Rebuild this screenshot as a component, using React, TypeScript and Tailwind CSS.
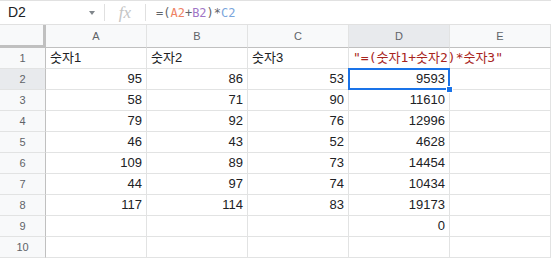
import React from "react";

const cols = ["A", "B", "C", "D", "E"];

// each row: A, B, C, D (E empty)
const rows: (string | number | null)[][] = [
  ["숫자1", "숫자2", "숫자3", "\"=(숫자1+숫자2)*숫자3\""],
  [95, 86, 53, 9593],
  [58, 71, 90, 11610],
  [79, 92, 76, 12996],
  [46, 43, 52, 4628],
  [109, 89, 73, 14454],
  [44, 97, 74, 10434],
  [117, 114, 83, 19173],
  [null, null, null, 0],
  [null, null, null, null],
];

const sans = "font-['Liberation_Sans','Noto_Sans_CJK_KR',sans-serif]";
const mono = "font-['DejaVu_Sans_Mono','Noto_Sans_CJK_KR',monospace]";

function FormulaBar() {
  return (
    <div className={`flex items-center h-[25px] border-t border-b border-[#e1e1e1] bg-white ${sans}`}>
      <div className="w-[104px] flex items-center justify-between pl-[8px] pr-[9px] text-[14px] text-[#202124]">
        <span>D2</span>
        <span className="w-0 h-0 border-l-[3px] border-r-[3px] border-t-[4px] border-l-transparent border-r-transparent border-t-[#80868b]" />
      </div>
      <div className="w-px h-[17px] bg-[#e0e0e0]" />
      <div className="w-[40px] flex justify-center text-[17px] italic text-[#c4c4c4] font-['Liberation_Serif',serif]">fx</div>
      <div className="w-px h-[17px] bg-[#e0e0e0]" />
      <div className={`pl-[10px] text-[12px] text-[#5f6368] ${mono}`}>
        =(<span className="text-[#ee8264]">A2</span>+<span className="text-[#a175c6]">B2</span>)*<span className="text-[#7aa5dc]">C2</span>
      </div>
    </div>
  );
}

function Cell({ value, row, col }: { value: string | number | null; row: number; col: number }) {
  const isText = typeof value === "string";
  const isFormulaText = row === 0 && col === 3;
  const selected = row === 1 && col === 3;
  return (
    <div
      className={`relative h-[21px] border-r border-b border-[#e2e3e3] flex items-center text-[13px] text-[#202124] ${
        isText ? "justify-start pl-[4px]" : "justify-end pr-[4px]"
      } ${isFormulaText ? `${mono} text-[12px] text-[#a8241d] pl-[3px]` : sans} ${selected ? "z-10" : ""}`}
    >
      <span className="whitespace-nowrap">{value}</span>
      {selected && (
        <div className="absolute -left-px -top-px w-[102px] h-[22px] border-2 border-[#1a73e8]">
          <div className="absolute -right-[5px] -bottom-[5px] w-[7px] h-[7px] bg-[#1a73e8] border border-white" />
        </div>
      )}
    </div>
  );
}

export default function App() {
  return (
    <div className="w-[551px] h-[259px] overflow-hidden bg-white">
      <FormulaBar />
      <div className={`grid grid-cols-[46px_repeat(5,101px)] ${sans}`}>
        {/* corner */}
        <div className="h-[23px] bg-[#f8f9fa] border-r-[3px] border-b-[3px] border-[#c0c0c0]" />
        {cols.map((c) => (
          <div
            key={c}
            className={`h-[23px] flex items-center justify-center text-[11px] text-[#5f6368] border-r border-r-[#e2e3e3] border-b border-b-[#c0c0c0] ${
              c === "D" ? "bg-[#e8eaed]" : "bg-[#f8f9fa]"
            }`}
          >
            {c}
          </div>
        ))}
        {rows.map((r, i) => (
          <React.Fragment key={i}>
            <div
              className={`h-[21px] flex items-center justify-center text-[11px] text-[#5f6368] border-r border-r-[#c0c0c0] border-b border-b-[#e2e3e3] ${
                i === 1 ? "bg-[#e8eaed]" : "bg-[#f8f9fa]"
              }`}
            >
              {i + 1}
            </div>
            {[0, 1, 2, 3, 4].map((c) => (
              <Cell key={c} value={r[c] ?? null} row={i} col={c} />
            ))}
          </React.Fragment>
        ))}
      </div>
    </div>
  );
}
